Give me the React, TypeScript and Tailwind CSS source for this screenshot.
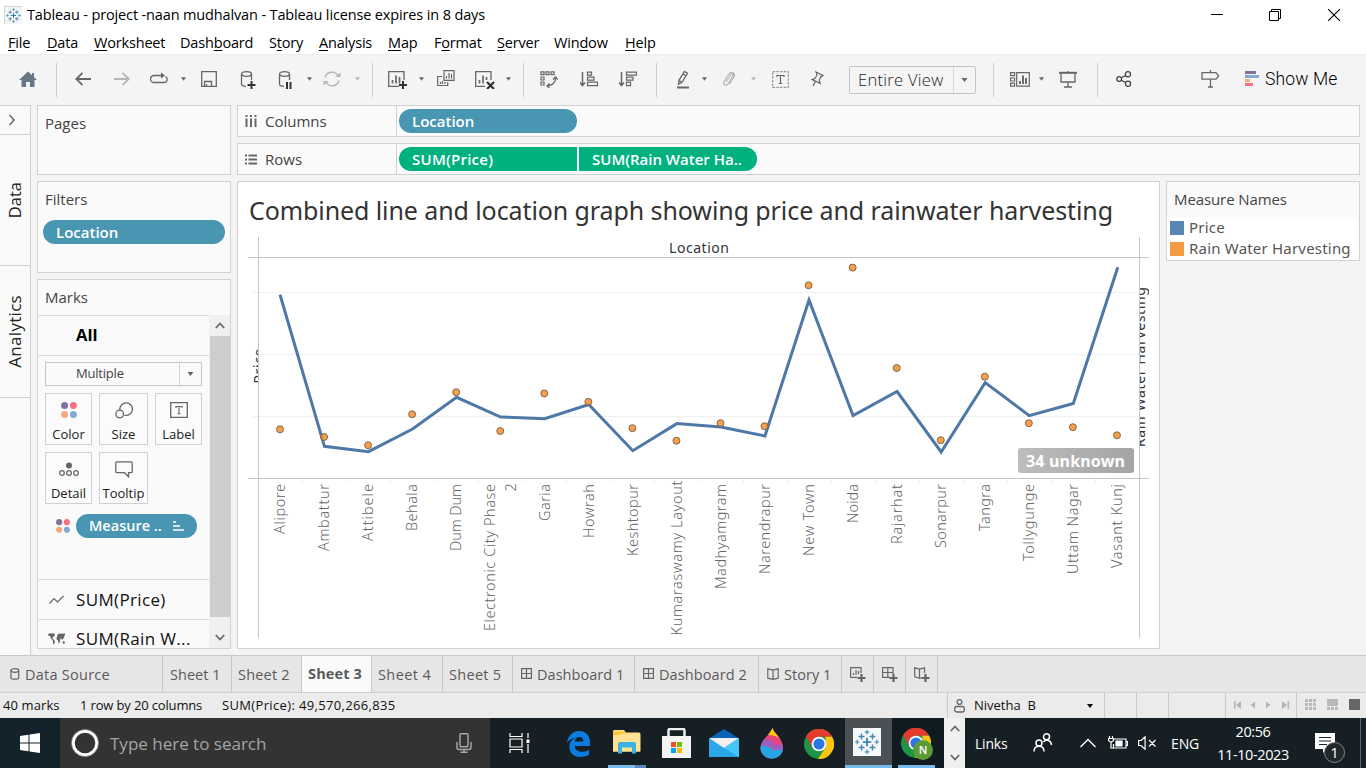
import React from "react";

const UI = "font-['Open_Sans','Noto_Sans',sans-serif]";
const SEG = "font-['Open_Sans','Noto_Sans',sans-serif]";

/* ---------- small shared pieces ---------- */

function Ico({ w = 20, h = 20, children, className = "" }: { w?: number; h?: number; children: React.ReactNode; className?: string }) {
  return (
    <svg width={w} height={h} viewBox={`0 0 ${w} ${h}`} fill="none" stroke="#666" strokeWidth="1.3" className={`shrink-0 ${className}`}>
      {children}
    </svg>
  );
}

function Slot({ className, children }: { className: string; children: React.ReactNode }) {
  return <div className={`flex h-full shrink-0 items-center justify-center ${className}`}>{children}</div>;
}

function Tool({ className, children }: { className: string; children: React.ReactNode }) {
  return <Slot className={`pb-[2px] ${className}`}>{children}</Slot>;
}

function Sep({ className = "" }: { className?: string }) {
  return <div className={`h-[34px] w-px shrink-0 bg-[#cfcfcf] ${className}`} />;
}

function Caret({ color = "#666", w = 5 }: { color?: string; w?: number }) {
  return (
    <svg width={w} height="4" viewBox="0 0 6 4" className="shrink-0">
      <path d="M0 0h6L3 4z" fill={color} />
    </svg>
  );
}

function TableauMark({ size, bg }: { size: number; bg: string }) {
  const plus = (x: number, y: number, r: number, c: string, sw: number) => (
    <path key={`${x}-${y}`} d={`M${x - r} ${y}H${x + r}M${x} ${y - r}V${y + r}`} stroke={c} strokeWidth={sw} />
  );
  return (
    <svg width={size} height={size} viewBox="0 0 28 28" className="shrink-0">
      <rect width="28" height="28" fill={bg} />
      {plus(14, 14, 4.3, "#2f7dab", 1.7)}
      {plus(8.5, 8.5, 3, "#4687ad", 1.4)}
      {plus(19.5, 8.5, 3, "#4687ad", 1.4)}
      {plus(8.5, 19.5, 3, "#4687ad", 1.4)}
      {plus(19.5, 19.5, 3, "#4687ad", 1.4)}
      {plus(14, 4.2, 2.3, "#4b8eb5", 1.2)}
      {plus(14, 23.8, 2.3, "#4b8eb5", 1.2)}
      {plus(4.2, 14, 2.3, "#4b8eb5", 1.2)}
      {plus(23.8, 14, 2.3, "#4b8eb5", 1.2)}
    </svg>
  );
}

/* ---------- title and menu ---------- */

function TitleBar() {
  return (
    <div className={`flex h-[30px] shrink-0 items-center bg-white ${SEG}`}>
      <div className="ml-1 flex size-[18px] items-center justify-center border border-[#d5d5d5] bg-[#f4f4f4]">
        <TableauMark size={17} bg="#f4f4f4" />
      </div>
      <span className="ml-[5px] whitespace-pre text-[14.5px] tracking-[-0.14px] text-black">Tableau - project -naan mudhalvan - Tableau license expires in 8 days</span>
      <div className="ml-auto flex items-center">
        <svg width="12" height="12" className="mr-[46px]"><path d="M0 5.5H12" stroke="#000" /></svg>
        <svg width="12" height="12" className="mr-[47px]" fill="none" stroke="#000">
          <path d="M.5 2.5h9v9h-9zM2.5 2.5v-2h9v9h-2" />
        </svg>
        <svg width="12" height="12" className="mr-[26px]"><path d="M0 0L12 12M12 0L0 12" stroke="#000" strokeWidth="1.1" /></svg>
      </div>
    </div>
  );
}

const MENUS: [string, string, string, string][] = [
  ["", "F", "ile", "w-[39px]"],
  ["", "D", "ata", "w-[47px]"],
  ["", "W", "orksheet", "w-[86px]"],
  ["Dash", "b", "oard", "w-[89px]"],
  ["S", "t", "ory", "w-[50px]"],
  ["", "A", "nalysis", "w-[69px]"],
  ["", "M", "ap", "w-[46px]"],
  ["F", "o", "rmat", "w-[63px]"],
  ["", "S", "erver", "w-[57px]"],
  ["Win", "d", "ow", "w-[71px]"],
  ["", "H", "elp", "w-[40px]"],
];

function MenuBar() {
  return (
    <div className={`flex h-6 shrink-0 items-center bg-white pl-2 pt-[2px] text-[14.5px] tracking-[-0.18px] text-black ${SEG}`}>
      {MENUS.map(([a, u, b, w]) => (
        <span key={a + u + b} className={`shrink-0 whitespace-nowrap ${w}`}>
          {a}
          <span className="underline decoration-1 underline-offset-2">{u}</span>
          {b}
        </span>
      ))}
    </div>
  );
}

/* ---------- toolbar ---------- */

function Toolbar() {
  return (
    <div className="flex h-[51px] shrink-0 items-center border-t border-[#ececec] bg-[#f4f4f4]">
      <Tool className="w-14">
        <Ico w={18} h={16}><path d="M9 .5L0 9h2.500v7H7v-5h4v5h4.500V9H18L15 6V2h-2v2.200z" fill="#697686" stroke="none" /></Ico>
      </Tool>
      <Sep />
      <Tool className="ml-3 w-7">
        <Ico w={16} h={14}><path d="M16 7H1.500M7.500 .8L1.300 7l6.200 6.200" strokeWidth="1.800" /></Ico>
      </Tool>
      <Tool className="w-[50px]">
        <Ico w={16} h={14}><path d="M0 7h14.500M8.500 .8L14.700 7l-6.200 6.200" stroke="#b4b4b4" strokeWidth="1.800" /></Ico>
      </Tool>
      <Tool className="w-6">
        <Ico w={18} h={14}>
          <path d="M13 3.500H4a3.200 3.200 0 0 0 0 7h10a3.200 3.200 0 0 0 1.500-6" />
          <path d="M11 .5l4 3-4 3z" fill="#666" stroke="none" />
        </Ico>
      </Tool>
      <Tool className="w-6"><Caret /></Tool>
      <Tool className="w-7">
        <Ico w={16} h={16}><path d="M.7.7h14.600v14.600H.7zM3.500 15v-4.500h7V15M5.500 15v-2" /></Ico>
      </Tool>
      <Tool className="w-[50px]">
        <Ico w={16} h={18} className="mb-[-1px]">
          <ellipse cx="6.500" cy="3" rx="5" ry="2.300" />
          <path d="M1.500 3v10c0 1.500 2 2.300 4.500 2.300M11.500 3v6" />
          <path d="M11.500 10v8M7.500 14h8" stroke="#333" strokeWidth="2" />
        </Ico>
      </Tool>
      <Tool className="w-6">
        <Ico w={14} h={18} className="mb-[-1px]">
          <ellipse cx="6.500" cy="3" rx="5" ry="2.300" />
          <path d="M1.500 3v10c0 1.500 2 2.300 4.500 2.300M11.500 3v6" />
          <path d="M9 11v7M12.500 11v7" stroke="#333" strokeWidth="2" />
        </Ico>
      </Tool>
      <Tool className="w-6"><Caret /></Tool>
      <Tool className="w-[22px]">
        <Ico w={18} h={16}>
          <path d="M2 6.500A7 7 0 0 1 15 5M16 9.500A7 7 0 0 1 3 11" stroke="#b4b4b4" />
          <path d="M17.500 1.500V6H12.500zM.5 14.500V10h5z" fill="#b4b4b4" stroke="none" />
        </Ico>
      </Tool>
      <Tool className="w-[29px]"><Caret color="#b8b8b8" /></Tool>
      <Sep />
      <Tool className="ml-[10px] w-7">
        <Ico w={20} h={18} className="mb-[-2px] ml-[2px]">
          <path d="M16 9V.7H.7v14.600H11" />
          <path d="M4.500 12.500V9M8 12.500V4.500M11.500 12.500V6" strokeWidth="1.700" />
          <path d="M15 10v8M11 14h8" stroke="#333" strokeWidth="2" />
        </Ico>
      </Tool>
      <Tool className="w-5"><Caret /></Tool>
      <Tool className="w-[30px]">
        <Ico w={18} h={17} className="mb-[2px]">
          <path d="M7 .7h10v9.600H7zM5 6.500H.7v9h10V12" strokeWidth="1.200" />
          <path d="M9.500 8.500V6M12 8.500V3M14.500 8.500V4M3.500 14v-2M5.500 14v-3M8 14v-2" strokeWidth="1.200" />
        </Ico>
      </Tool>
      <Tool className="ml-[10px] w-7">
        <Ico w={20} h={18} className="mb-[-2px]">
          <path d="M16 9V.7H.7v14.600H10" />
          <path d="M4.500 12.500V9M8 12.500V4.500M11.500 9V6" strokeWidth="1.700" />
          <path d="M12 11l7 7M19 11l-7 7" stroke="#333" strokeWidth="2.200" />
        </Ico>
      </Tool>
      <Tool className="w-[18px]"><Caret /></Tool>
      <Sep className="ml-[6px]" />
      <Tool className="ml-[11px] w-7">
        <Ico w={18} h={17}>
          <path d="M1 .9h3v2.800H1zM6 .9h3v2.800H6zM11 .9h3v2.800h-3zM1 6h3v3H1zM1 11h3v3H1z" strokeWidth="1.200" />
          <path d="M15.500 7c0 5-3.500 7.500-8.500 8M13 8.500l2.500-2.500 2.300 2.500M9.500 12.500L7 15l2.500 2" />
        </Ico>
      </Tool>
      <Tool className="w-[50px]">
        <Ico w={18} h={16} className="ml-[2px]">
          <path d="M2.500 1v13M0 11.500l2.500 3 2.500-3" strokeWidth="1.500" />
          <path d="M7.500 1.200h4v3h-4zM7.500 6.200h6.500v3H7.500zM7.500 11.200h10v3.500h-10z" strokeWidth="1.200" />
        </Ico>
      </Tool>
      <Tool className="w-[30px]">
        <Ico w={18} h={16}>
          <path d="M2.500 1v13M0 11.500l2.500 3 2.500-3" strokeWidth="1.500" />
          <path d="M7.500 1.200h10v3h-10zM7.500 6.200h6.500v3H7.500zM7.500 11.200h4v3.500h-4z" strokeWidth="1.200" />
        </Ico>
      </Tool>
      <Sep className="ml-[13px]" />
      <Tool className="ml-3 w-7">
        <Ico w={14} h={19}>
          <path d="M8.500 1.500l3 1.800-5.500 9-3.500 2 .5-4z M7 4l3 1.800M3 10.500l3 1.800" strokeWidth="1.300" />
          <path d="M1 17.500h12" strokeWidth="2" />
        </Ico>
      </Tool>
      <Tool className="w-[14px]"><Caret /></Tool>
      <Tool className="w-9">
        <Ico w={14} h={16}>
          <path d="M4 11l5-7.500c1-1.500 3-.3 2 1.300L6 13c-1.500 2.500-5.500.5-4-2.200L7 3c2-3 7-1 5 2.700L7.500 13" stroke="#b4b4b4" strokeWidth="1.200" />
        </Ico>
      </Tool>
      <Tool className="w-3"><Caret color="#b8b8b8" /></Tool>
      <Tool className="w-[42px]">
        <Ico w={17} h={17}>
          <path d="M.7.7h15.600v15.600H.7z" strokeDasharray="2.500 1.200" stroke="#999" />
          <path d="M5 6V4.500h7V6M8.500 4.500v8M6.800 12.500h3.400" strokeWidth="1.200" />
        </Ico>
      </Tool>
      <Tool className="w-8">
        <Ico w={13} h={16}><path d="M5 1l7 3.500-1.200 1.200-.9-.2-1.700 3.800 1 3L1 8.500l2.700-.8L6 4 5.600 2.500zM4.500 10.300L2 15" strokeWidth="1.200" /></Ico>
      </Tool>
      <div className="ml-4 flex h-[28px] w-[127px] shrink-0 rounded-[2px] border border-[#c4c4c4] bg-[#f5f5f5]">
        <span className={`flex flex-1 items-center whitespace-nowrap pl-[8px] text-[16.500px] font-light tracking-[0.3px] text-[#222] ${UI}`}>Entire View</span>
        <span className="flex w-[22px] items-center justify-center border-l border-[#d8d8d8]"><Caret w={7} /></span>
      </div>
      <Sep className="ml-[17px]" />
      <Tool className="ml-3 w-7">
        <Ico w={20} h={15}>
          <path d="M.6.7h4v3h-4zM.6 6h4v3h-4zM.6 11.200h4v3h-4zM6.700.7h12.600v13.500H6.700z" strokeWidth="1.200" />
          <path d="M10 12V9M13 12V3.500M16 12V6" strokeWidth="1.900" />
        </Ico>
      </Tool>
      <Tool className="w-[14px]"><Caret /></Tool>
      <Tool className="w-10">
        <Ico w={18} h={17}>
          <path d="M0 1.800h18" strokeWidth="2" />
          <path d="M2 2.500v8.500h14V2.500M9 0v2M9 11v5M5 16h8" />
        </Ico>
      </Tool>
      <Sep className="ml-[9px]" />
      <Tool className="w-[52px]">
        <Ico w={16} h={16}>
          <g stroke="#444"><circle cx="3.200" cy="8" r="2.400" /><circle cx="12" cy="3.200" r="2.600" /><circle cx="12" cy="12.800" r="2.600" /><path d="M5.300 6.800l4.300-2.300M5.300 9.200l4.300 2.300" /></g>
        </Ico>
      </Tool>
      <Tool className="ml-[46px] w-7">
        <Ico w={19} h={18}><path d="M1 2.700h14l2.700 3.300L15 9.200H1zM9.500 0v2.500M9.500 9.500V17M7 17h5" /></Ico>
      </Tool>
      <Tool className="ml-[21px] w-[14px]">
        <svg width="14" height="16" className="shrink-0">
          <path d="M0 1.500h11" stroke="#84709c" strokeWidth="3" />
          <path d="M0 5.500h14" stroke="#85a8d0" strokeWidth="3" />
          <path d="M0 9.500h5" stroke="#f5a97f" strokeWidth="3" />
          <path d="M0 13.500h8" stroke="#fa7080" strokeWidth="3" />
        </svg>
      </Tool>
      <span className="ml-[6px] whitespace-nowrap pb-[2px] font-['Roboto',sans-serif] text-[17.5px] font-light tracking-[0.15px] text-black">Show Me</span>
    </div>
  );
}

/* ---------- left side ---------- */

function Rail() {
  const tab = "flex shrink-0 items-center justify-center border-b border-[#d0d0d0]";
  const txt = `rotate-180 whitespace-nowrap text-[#222] [writing-mode:vertical-rl] ${UI}`;
  return (
    <div className="flex w-[31px] shrink-0 flex-col border-r border-t border-[#d0d0d0] bg-[#fafafa]">
      <div className={`${tab} h-[29px] pr-[6px]`}>
        <Ico w={8} h={12}><path d="M1.500 1l4.500 5-4.500 5" strokeWidth="1.500" /></Ico>
      </div>
      <div className={`${tab} h-[131px]`}><span className={`${txt} text-[16.500px]`}>Data</span></div>
      <div className={`${tab} h-[132px]`}><span className={`${txt} text-[17px] tracking-[0.3px]`}>Analytics</span></div>
    </div>
  );
}

function Card({ title, className, children }: { title: string; className: string; children?: React.ReactNode }) {
  return (
    <div className={`flex shrink-0 flex-col overflow-hidden border border-[#d2d2d2] bg-[#fafafa] ${className}`}>
      <div className={`flex h-[35px] shrink-0 items-center pl-[7px] text-[15px] text-[#444] ${UI}`}>{title}</div>
      {children}
    </div>
  );
}

function FourDots({ size, className = "" }: { size: number; className?: string }) {
  return (
    <svg width={size} height={size} viewBox="0 0 16 16" className={`shrink-0 ${className}`}>
      <circle cx="3.600" cy="3.600" r="3.500" fill="#84709c" />
      <circle cx="12.400" cy="3.600" r="3.500" fill="#fa7080" />
      <circle cx="3.600" cy="12.400" r="3.500" fill="#f5a97f" />
      <circle cx="12.400" cy="12.400" r="3.500" fill="#85a8d0" />
    </svg>
  );
}

function MarkButton({ label, className, children }: { label: string; className: string; children: React.ReactNode }) {
  return (
    <div className={`flex h-[52px] shrink-0 flex-col items-center border border-[#d0d0d0] bg-[#fbfbfb] ${className}`}>
      <div className="flex h-[32px] items-center justify-center">{children}</div>
      <span className={`whitespace-nowrap text-[13px] leading-[17px] text-[#222] ${UI}`}>{label}</span>
    </div>
  );
}

function MarksCard() {
  return (
    <Card title="Marks" className="mt-[6px] h-[370px]">
      <div className="flex min-h-0 flex-1">
        <div className="flex w-[171px] shrink-0 flex-col overflow-hidden border-t border-[#dcdcdc]">
          <div className={`flex h-[39px] shrink-0 items-center pl-[38px] text-[16.500px] font-bold text-black ${UI}`}>All</div>
          <div className="flex shrink-0 flex-col border-t border-[#dcdcdc] pl-[7px] pt-[6px]">
            <div className="flex h-6 w-[157px] border border-[#c6c6c6]">
              <span className={`flex flex-1 items-center pl-[30px] text-[13px] tracking-[-0.2px] text-[#444] ${UI}`}>Multiple</span>
              <span className="flex w-[22px] items-center justify-center border-l border-[#d6d6d6]"><Caret w={7} /></span>
            </div>
            <div className="mt-[7px] flex">
              <MarkButton label="Color" className="w-[47px]"><FourDots size={16} /></MarkButton>
              <MarkButton label="Size" className="ml-[7px] w-[49px]">
                <Ico w={18} h={18}><path d="M5 9.500a6.300 6.300 0 1 1 4.500 4.700" /><circle cx="4.700" cy="13" r="3.800" /></Ico>
              </MarkButton>
              <MarkButton label="Label" className="ml-[7px] w-[47px]">
                <Ico w={18} h={16}><path d="M.7.7h16.600v14.600H.7z" /><path d="M6 6V4.500h6V6M9 4.500v7M7.500 11.700h3" strokeWidth="1.100" /></Ico>
              </MarkButton>
            </div>
            <div className="mt-[7px] flex">
              <MarkButton label="Detail" className="w-[47px]">
                <Ico w={20} h={15}><circle cx="10" cy="3.500" r="3" fill="#666" stroke="none" /><circle cx="3" cy="11" r="2.300" /><circle cx="10" cy="11" r="2.300" /><circle cx="17" cy="11" r="2.300" /></Ico>
              </MarkButton>
              <MarkButton label="Tooltip" className="ml-[7px] w-[49px]">
                <Ico w={18} h={17}><path d="M2 .8h14q1.200 0 1.200 1.200v8.500q0 1.200-1.200 1.200h-2.500v4l-4-4H2Q.8 11.700.8 10.500V2Q.8.8 2 .8z" /></Ico>
              </MarkButton>
            </div>
            <div className="mt-[10px] flex h-6 items-center pl-[11px]">
              <FourDots size={14} />
              <div className={`ml-[6px] flex h-6 w-[121px] items-center rounded-full bg-[#4996b2] pl-[13px] text-[14.500px] font-semibold text-white ${UI}`}>
                Measure ..
                <svg width="12" height="10" className="ml-[11px]"><path d="M0 1h3M0 5h7M0 9h11" stroke="#fff" strokeWidth="1.700" /></svg>
              </div>
            </div>
          </div>
          <div className={`mt-[41px] flex h-[40px] shrink-0 items-center border-t border-[#dcdcdc] pl-[11px] text-[17px] tracking-[0.35px] text-[#111] ${UI}`}>
            <Ico w={15} h={10} className="mr-3"><path d="M.5 8.500l4.500-5 3.500 3.500L14.500 1" strokeWidth="1.200" /></Ico>
            SUM(Price)
          </div>
          <div className={`flex h-[29px] shrink-0 items-center whitespace-nowrap border-t border-[#dcdcdc] pl-[10px] pt-[9px] text-[17px] leading-[18px] tracking-[0.35px] text-[#111] ${UI}`}>
            <svg width="17" height="12" className="mr-[11px] shrink-0" fill="#666">
              <path d="M0 1l3-.7 4 .5-.5 2.200L5 4l-.5 1.500L6 7l1 1.200-1 3.300-1-.8V8L3 5.500 2 3 .5 2.800zM9.500 1.500l2-1 2 .3L17 .6v2l-1 .6.3 1.800-1.300.5-.8 2-1-2-1 .2-.2 2.800L10.800 11 10 7.500 8.300 6 9 3.800zM14.500 8.500l2-.3.500 2.300-2 .3z" />
            </svg>
            SUM(Rain W...
          </div>
        </div>
        <div className="flex flex-1 flex-col bg-[#f0f0f0] pl-px">
          <div className="flex h-[21px] shrink-0 items-center justify-center"><Ico w={10} h={7}><path d="M.8 6L5 1.500 9.200 6" strokeWidth="1.800" /></Ico></div>
          <div className="flex-1 bg-[#cdcdcd]" />
          <div className="flex h-[31px] shrink-0 items-center justify-center pt-[10px]"><Ico w={10} h={7}><path d="M.8 1L5 5.500 9.200 1" strokeWidth="1.800" /></Ico></div>
        </div>
      </div>
    </Card>
  );
}

/* ---------- shelves ---------- */

function Shelf({ label, icon, children, className = "" }: { label: string; icon: React.ReactNode; children: React.ReactNode; className?: string }) {
  return (
    <div className={`flex h-8 shrink-0 border border-[#d2d2d2] bg-[#fafafa] ${className}`}>
      <div className={`flex w-[159px] shrink-0 items-center border-r border-[#d2d2d2] pl-[7px] text-[15px] text-[#444] ${UI}`}>
        <span className="mr-2 flex w-3 justify-center">{icon}</span>
        {label}
      </div>
      <div className="flex items-center pl-[2px]">{children}</div>
    </div>
  );
}

const PILL = "flex h-6 shrink-0 items-center whitespace-nowrap pl-[13px] text-[15px] font-semibold text-white";

/* ---------- chart ---------- */

const PLACES: [string, number, number, number][] = [
  ["Alipore", 296, 429.3, 50],
  ["Ambattur", 446.3, 437, 67],
  ["Attibele", 451.7, 445.3, 57],
  ["Behala", 429, 414.3, 47],
  ["Dum Dum", 397.3, 392.2, 67],
  ["Electronic City Phase", 417, 431, 147],
  ["Garia", 418.7, 393.4, 37],
  ["Howrah", 404.5, 401.8, 54],
  ["Keshtopur", 450.7, 428.2, 72],
  ["Kumaraswamy Layout", 423.6, 440.7, 155],
  ["Madhyamgram", 427, 423.2, 105],
  ["Narendrapur", 436, 426.3, 90],
  ["New Town", 300, 285.3, 72],
  ["Noida", 415.5, 267.6, 39],
  ["Rajarhat", 391.5, 368, 60],
  ["Sonarpur", 452, 440.2, 64],
  ["Tangra", 382.6, 376.7, 47],
  ["Tollygunge", 415.7, 423.2, 77],
  ["Uttam Nagar", 403.5, 427.2, 90],
  ["Vasant Kunj", 268.7, 435.3, 84],
];

const px = (i: number) => 280.4 + i * 44.05;

function Chart() {
  return (
    <svg width="921" height="410" viewBox="238 237 921 410" className="block shrink-0" fontFamily="'Noto Sans', sans-serif">
      <defs>
        <clipPath id="axisLeft"><rect x="248" y="258" width="10" height="220" /></clipPath>
        <clipPath id="axisRight"><rect x="1140" y="258" width="9" height="220" /></clipPath>
        <linearGradient id="badge" x1="0" x2="1"><stop offset="0" stopColor="#bdbdbd" /><stop offset="1" stopColor="#a4a4a4" /></linearGradient>
      </defs>
      <path d="M253 292.500H1144M253 354.500H1144M253 416.500H1144" stroke="#f0f0f0" />
      {PLACES.slice(1).map((p, i) => (
        <path key={p[0]} d={`M${Math.round(302 + i * 44.05) + 0.5} 479v3`} stroke="#ececec" />
      ))}
      <path d="M248 257.500H1149M248 478.500H1149M258.500 237V638M1139.500 237V638" stroke="#c6c6c6" />
      <text x="669" y="252.500" fontSize="14" fill="#333" textLength="60">Location</text>
      <g clipPath="url(#axisLeft)">
        <text transform="translate(264 383.500) rotate(-90)" fontSize="14" fill="#333" textLength="35">Price</text>
      </g>
      <g clipPath="url(#axisRight)">
        <text transform="translate(1144.600 447) rotate(-90)" fontSize="14" fill="#333" textLength="160">Rain Water Harvesting</text>
      </g>
      <polyline points={PLACES.map((p, i) => `${px(i)},${p[1]}`).join(" ")} fill="none" stroke="#4e79a7" strokeWidth="3" strokeLinecap="square" />
      {PLACES.map((p, i) => (
        <circle key={p[0]} cx={px(i) - 0.4} cy={p[2]} r="3.500" fill="#f28e2b" fillOpacity="0.850" stroke="#75604c" strokeWidth="0.900" />
      ))}
      {PLACES.map((p, i) => {
        const top = i === 9 ? 480.5 : 484;
        const x = i === 5 ? 495 : px(i) + 4.8;
        return (
          <text key={p[0]} transform={`translate(${x} ${top + p[3]}) rotate(-90)`} fontSize="14.500" fontWeight="300" fill="#666" textLength={p[3]}>
            {p[0]}
          </text>
        );
      })}
      <text transform="translate(515.500 491.500) rotate(-90)" fontSize="14.500" fontWeight="300" fill="#666">2</text>
      <rect x="1018" y="448" width="116" height="25" rx="3" fill="url(#badge)" />
      <text x="1026" y="467" fontSize="16" fontWeight="700" fill="#fff" textLength="99">34 unknown</text>
    </svg>
  );
}

function Legend() {
  const row = "flex h-[21px] items-center whitespace-nowrap pl-[3px] font-['Noto_Sans',sans-serif] text-[15px] tracking-[0.2px] text-[#555]";
  return (
    <div className="ml-[6px] h-[80px] w-[194px] shrink-0 border border-[#d2d2d2] bg-white">
      <div className={`flex h-[35px] items-center bg-[#fafafa] pl-[7px] text-[15px] tracking-[-0.1px] text-[#444] ${UI}`}>Measure Names</div>
      <div className={row}><span className="mr-[5px] size-[14px] bg-[#5a86b4]" />Price</div>
      <div className={row}><span className="mr-[5px] size-[14px] bg-[#f39c43]" />Rain Water Harvesting</div>
    </div>
  );
}

/* ---------- bottom bars ---------- */

const TAB = "flex h-full shrink-0 items-center whitespace-nowrap border-r border-[#c9c9c9]";

function GridIcon({ plus = false }: { plus?: boolean }) {
  return (
    <Ico w={plus ? 16 : 11} h={plus ? 15 : 11} className={plus ? "" : "mb-[2px]"}>
      <path d={plus ? "M11 7V.6H.6v9.800H8M5.800.6v9.800M.6 5.500H11" : "M.6.6h9.800v9.800H.6zM5.500.6v9.800M.6 5.500h9.800"} strokeWidth="1.200" />
      {plus && <path d="M11.500 7v8M7.500 11h8" strokeWidth="2.200" />}
    </Ico>
  );
}

function BookIcon({ plus = false }: { plus?: boolean }) {
  return (
    <Ico w={plus ? 16 : 12} h={plus ? 15 : 12} className={plus ? "" : "mb-[1px]"}>
      <path d={plus ? "M5.500 2.200L.7.8v9l4.800 1.500zM5.500 2.200L10.500.8V6M5.500 11.300l2-.6" : "M6 2.200L.8.8v9.400L6 11.400l5.200-1.200V.8zM6 2.200v9"} strokeWidth="1.200" />
      {plus && <path d="M11.500 7v8M7.500 11h8" strokeWidth="2.200" />}
    </Ico>
  );
}

function TabBar() {
  return (
    <div className={`flex h-[37px] shrink-0 border-t border-[#c9c9c9] bg-[#e6e6e6] text-[14.500px] tracking-[0.03px] text-[#5a5a5a] ${UI}`}>
      <div className={`${TAB} w-[163px] pl-[10px] pt-px tracking-[0.25px]`}>
        <Ico w={10} h={12} className="mb-[2px] mr-[5px]"><ellipse cx="4.800" cy="2.500" rx="3.900" ry="1.800" /><path d="M.9 2.500v7.200c0 2 7.800 2 7.800 0V2.500" strokeWidth="1.200" /></Ico>
        Data Source
      </div>
      <div className={`${TAB} w-[69px] pl-[7px] pt-px`}>Sheet 1</div>
      <div className={`${TAB} w-[70px] pl-[6px] pt-px tracking-[0.2px]`}>Sheet 2</div>
      <div className={`${TAB} w-[70px] bg-[#fafafa] pl-[6px] font-bold tracking-[0.15px]`}>Sheet 3</div>
      <div className={`${TAB} w-[71px] pl-[6px] pt-px tracking-[0.4px]`}>Sheet 4</div>
      <div className={`${TAB} w-[70px] pl-[6px] pt-px tracking-[0.3px]`}>Sheet 5</div>
      <div className={`${TAB} w-[122px] gap-[5px] pl-2 pt-px`}><GridIcon />Dashboard 1</div>
      <div className={`${TAB} w-[124px] gap-[5px] pl-2 pt-px tracking-[0.1px]`}><GridIcon />Dashboard 2</div>
      <div className={`${TAB} w-[83px] gap-[5px] pl-2 pt-px`}><BookIcon />Story 1</div>
      <div className={`${TAB} w-8 justify-center pl-px`}>
        <Ico w={16} h={15}><path d="M11 6V.6H.6v9.800H7M3.500 8V6M6 8V3M8.500 7V4" strokeWidth="1.200" /><path d="M11.500 7v8M7.500 11h8" strokeWidth="2.200" /></Ico>
      </div>
      <div className={`${TAB} w-8 justify-center pl-px`}><GridIcon plus /></div>
      <div className={`${TAB} w-8 justify-center pl-px`}><BookIcon plus /></div>
    </div>
  );
}

function StatusBar() {
  const cell = "h-full shrink-0 border-l border-[#cacaca]";
  return (
    <div className={`flex h-[26px] shrink-0 items-center border-t border-[#cfcfcf] bg-[#ebebeb] text-[13px] text-[#111] ${UI}`}>
      <span className="w-[77px] shrink-0 whitespace-nowrap pl-[3px] tracking-[0.1px]">40 marks</span>
      <span className="w-[142px] shrink-0 whitespace-nowrap pl-[3px] tracking-[-0.15px]">1 row by 20 columns</span>
      <span className="flex-1 whitespace-nowrap pl-[3px] tracking-[0.35px]">SUM(Price): 49,570,266,835</span>
      <div className={`${cell} flex w-[157px] items-center pl-[6px]`}>
        <Ico w={11} h={14}><circle cx="5.500" cy="3" r="2.400" /><rect x=".7" y="7.500" width="9.600" height="5.500" rx="2" /></Ico>
        <span className={`ml-[9px] whitespace-pre text-[13px] ${SEG}`}>Nivetha  B</span>
        <span className="ml-auto mr-[10px]"><Caret color="#000" w={8} /></span>
      </div>
      <div className={`${cell} w-8`} />
      <div className={`${cell} w-8`} />
      <div className={`${cell} w-[57px]`} />
      <div className={`${cell} flex w-[71px] items-center justify-center pb-[2px]`}>
        <svg width="55" height="8" fill="#b5b5b5">
          <path d="M0 0h1.500v8H0zM7 0v8L2 4zM21 0.500v7L16.500 4zM32 .5v7L36.500 4zM48 0v8l5-4zM53.500 0H55v8h-1.500z" />
        </svg>
      </div>
      <div className={`${cell} flex w-[70px] items-center pb-px pl-[8px]`}>
        <svg width="56" height="12" fill="#b8b8b8">
          <path d="M0 0h3v3H0zM4 0h3v3H4zM8 0h3v3H8zM0 4h3v3H0zM4 4h3v3H4zM8 4h3v3H8zM0 8h3v3H0zM4 8h3v3H4zM8 8h3v3H8zM22 0h11v7H22zM22 8h3v3h-3zM26 8h3v3h-3zM30 8h3v3h-3z" />
          <path d="M44 0h11v11H44z" fill="#666" />
        </svg>
      </div>
    </div>
  );
}

function Chrome() {
  return (
    <svg width="30" height="30" viewBox="0 0 30 30" className="shrink-0">
      <circle cx="15" cy="15" r="15" fill="#1e9447" />
      <path d="M2 7.500A15 15 0 0 1 28 7.500H15L8.500 18.800z" fill="#e33b2e" />
      <path d="M28 7.500A15 15 0 0 1 14 30L21.500 18.700V7.500z" fill="#fdc512" />
      <path d="M2 7.500A15 15 0 0 1 28 7.500H15z" fill="#e33b2e" />
      <circle cx="15" cy="15" r="7.300" fill="#fff" />
      <circle cx="15" cy="15" r="5.600" fill="#2a76e8" />
    </svg>
  );
}

function TaskBar() {
  return (
    <div className={`flex h-[50px] shrink-0 items-center bg-[#151f24] ${SEG}`}>
      <div className="flex h-full w-[60px] shrink-0 items-center justify-center bg-[#14232b]">
        <svg width="20" height="20" fill="#fff"><path d="M0 3l8.500-1.200v7.700H0zM9.500 1.600L20 0v9.500H9.500zM0 10.500h8.500v7.700L0 17zM9.500 10.500H20V20L9.500 18.400z" /></svg>
      </div>
      <div className="flex h-full w-[430px] shrink-0 items-center bg-[#333] pl-[11px]">
        <svg width="28" height="28" className="shrink-0"><circle cx="14" cy="14" r="11.800" fill="none" stroke="#fff" strokeWidth="3" /><circle cx="14" cy="14" r="13.500" fill="none" stroke="#999" strokeWidth=".8" /></svg>
        <span className="ml-[11px] whitespace-nowrap pt-px text-[17px] text-[#a5a5a5]">Type here to search</span>
        <svg width="16" height="20" className="ml-auto mr-[18px]" fill="none" stroke="#aaa" strokeWidth="1.400"><rect x="4" y=".8" width="8" height="13" rx="1" /><path d="M1 9v5.500q0 2 2 2h10q2 0 2-2V9M8 16.500v2.700M4.500 19.200h7" /></svg>
      </div>
      <Slot className="w-[59px]">
        <svg width="21" height="20" fill="none" stroke="#fff" strokeWidth="1.200"><path d="M1 0v3.500h12V0M1 20v-3.500h12V20M1 6h12v8H1zM19 0v5M19 11v9" /><path d="M17.500 6.500h3v3.500h-3z" fill="#fff" stroke="none" /></svg>
      </Slot>
      <Slot className="ml-[2px] w-[54px] pt-px">
        <svg width="25" height="26" viewBox="0 0 26 27" fill="#0a7ce0">
          <path d="M1 12.500C2 5 7 0 13.500 0 21 0 25 5.500 25 11.500V15.500H9c.3 4 3.800 6 8 6 2.700 0 5-.7 7-2v5.300C21.500 26.300 18.500 27 15.500 27 8 27 3.500 22.500 3.500 16.500 3.500 12 6 9 9.500 7.300 6 7.500 3 9.200 1 12.500zM9.200 11h8.900c0-3-1.600-4.800-4.300-4.800S9.500 8.200 9.200 11z" />
        </svg>
      </Slot>
      <div className="flex h-full w-[44px] shrink-0 flex-col items-center">
        <div className="flex flex-1 items-center pt-[1px]">
          <svg width="28" height="25"><path d="M0 1.500Q0 0 1.500 0H11l2 2.500h13q1.500 0 1.500 1.500v17.500H0z" fill="#ffe08a" /><path d="M0 6Q0 2 2 2h9l2 1" fill="#f9c536" stroke="#f9c536" /><path d="M0 5h27v16.500H0z" fill="#ffe392" /><path d="M5 23.500V14q0-2 2-2h14q2 0 2 2v9.500h-4v-6h-10v6z" fill="#3bb1e5" /></svg>
        </div>
        <div className="flex h-[3px] w-[38px] bg-[#5a89b4]"><div className="w-[27px] bg-[#76b9ed]" /></div>
      </div>
      <Slot className="w-[54px]">
        <svg width="29" height="30"><path d="M6.500 9V2.500Q6.500 1 8 1h13q1.500 0 1.500 1.500V9" fill="none" stroke="#eee" strokeWidth="2.500" /><path d="M0 8h29v22H0z" fill="#f4f4f4" /><path d="M9 14h5v5H9z" fill="#f25022" /><path d="M15 14h5v5h-5z" fill="#7fba00" /><path d="M9 20h5v5H9z" fill="#00a4ef" /><path d="M15 20h5v5h-5z" fill="#ffb900" /></svg>
      </Slot>
      <Slot className="w-[41px]">
        <svg width="30" height="28"><path d="M0 9.500L15 0l15 9.500z" fill="#0a63b8" /><path d="M1 9h28v10L15 24 1 19z" fill="#f1f1f1" /><path d="M0 9v19h30V9L15 19z" fill="#2ba6e8" /><path d="M30 9v19L15 19z" fill="#45c6f8" /></svg>
      </Slot>
      <Slot className="w-[55px]">
        <svg width="24" height="31" viewBox="0 0 24 31">
          <defs><clipPath id="drop"><path d="M12.500 0C14 6 23 10 23 20c0 6-5 10.500-11 10.500S.500 26 .500 20C.500 12 9 8 12.500 0z" /></clipPath></defs>
          <g clipPath="url(#drop)"><path d="M0 0h24v31H0z" fill="#e8467c" /><path d="M9 0h8l4 11q-6-4-13-4z" fill="#fcc60e" /><path d="M0 12q8-3 12 2t12 2v5q-6 4-11-1T0 20z" fill="#9a5fc0" /><path d="M0 19q7-3 11 1t13 1v10H0z" fill="#25a5e5" /></g>
        </svg>
      </Slot>
      <Slot className="w-[40px] pt-0.5"><Chrome /></Slot>
      <div className="ml-[6px] flex h-full w-[47px] shrink-0 flex-col items-center bg-[#4a5054]">
        <div className="mr-[3px] flex flex-1 items-center"><TableauMark size={28} bg="#f5f8fa" /></div>
        <div className="h-[3px] w-full bg-[#76b9ed]" />
      </div>
      <div className="flex h-full w-[52px] shrink-0 flex-col items-center bg-[#101b21] pr-[4px]">
        <div className="relative flex flex-1 items-center pt-0.5"><Chrome />
          <span className="absolute -right-[2px] bottom-[5px] flex size-[20px] items-center justify-center rounded-full bg-[#5d9b37] text-[11px] font-semibold text-white">N</span>
        </div>
        <div className="h-[3px] w-[37px] bg-[#76b9ed]" />
      </div>
      <div className="flex h-full w-[21px] shrink-0 flex-col items-center justify-between bg-[#f0f0f0] py-[7px]">
        <Ico w={10} h={7}><path d="M.8 6L5 1.500 9.200 6" strokeWidth="1.800" /></Ico>
        <Ico w={10} h={7}><path d="M.8 1L5 5.500 9.200 1" strokeWidth="1.800" /></Ico>
      </div>
      <span className="ml-[10px] w-[58px] shrink-0 text-[14px] tracking-[-0.2px] text-white">Links</span>
      <svg width="20" height="20" className="shrink-0" fill="none" stroke="#fff" strokeWidth="1.500"><circle cx="13.500" cy="3.800" r="3" /><circle cx="6" cy="10" r="3" /><path d="M1 18.500c0-3.500 2-5.300 5-5.300s5 1.800 5 5.300M10.300 9c3.700-3.500 8-1 8.200 3" /></svg>
      <svg width="16" height="10" className="ml-[27px] shrink-0" fill="none" stroke="#fff" strokeWidth="1.300"><path d="M.5 9L8 1.500 15.500 9" /></svg>
      <svg width="20" height="14" className="ml-[12px] shrink-0" fill="none" stroke="#fff" strokeWidth="1.200"><path d="M6 3h12v9H5.500V8M18.500 5.500H19.500v4h-1" /><path d="M8 5h6v5H8z" fill="#fff" /><path d="M1.500 0v2.500M4.500 0v2.500M.5 2.500h5v2L3 6.500.5 4.500zM3 6v6h2.500" /></svg>
      <svg width="19" height="14" className="ml-[10px] shrink-0" fill="none" stroke="#fff" strokeWidth="1.200"><path d="M.6 4.500h2.500l4-3.700v12.400l-4-3.700H.6zM11 4l6.500 6.500M17.500 4L11 10.500" /></svg>
      <span className="ml-[14px] w-[36px] shrink-0 text-[14px] tracking-[-0.1px] text-white">ENG</span>
      <div className="ml-[4px] flex w-[84px] shrink-0 flex-col items-center whitespace-nowrap text-[14.500px] leading-[23px] tracking-[-0.4px] text-white">
        <span>20:56</span>
        <span>11-10-2023</span>
      </div>
      <div className="relative ml-[20px] mt-[9px] h-[30px] w-[32px] shrink-0">
        <svg width="20" height="20"><path d="M0 0h20v16h-8l-4 4v-4H0z" fill="#fff" /><path d="M4 4.500h12M4 8h12M4 11.500h8" stroke="#1a2227" strokeWidth="1.200" /></svg>
        <span className="absolute left-[9px] top-[9px] flex size-[21px] items-center justify-center rounded-full border border-[#888] bg-[#20282c] text-[15px] text-white">1</span>
      </div>
      <div className="ml-auto mr-[5px] h-full w-px bg-[#59646a]" />
    </div>
  );
}

export default function App() {
  return (
    <div className="flex h-[768px] w-[1366px] flex-col overflow-hidden bg-[#f4f4f4]">
      <TitleBar />
      <MenuBar />
      <Toolbar />
      <div className="flex min-h-0 flex-1">
        <Rail />
        <div className="ml-[6px] flex w-[194px] shrink-0 flex-col">
          <Card title="Pages" className="h-[70px]" />
          <Card title="Filters" className="mt-[6px] h-[92px]">
            <div className={`ml-[5px] mt-[3px] w-[182px] rounded-full bg-[#4996b2] ${PILL} ${UI}`}>Location</div>
          </Card>
          <MarksCard />
        </div>
        <div className="ml-[6px] flex min-w-0 flex-1 flex-col">
          <div className="mr-[6px] flex flex-col">
            <Shelf
              label="Columns"
              icon={<Ico w={12} h={13}><path d="M1.500 0v2M6 0v2M10.500 0v2M1.500 3.500V12M6 3.500V12M10.500 3.500V12" strokeWidth="2" /></Ico>}
            >
              <div className={`w-[178px] rounded-full bg-[#4996b2] ${PILL} ${UI}`}>Location</div>
            </Shelf>
            <Shelf
              label="Rows"
              className="mt-[6px]"
              icon={<Ico w={12} h={11}><path d="M0 1.500h2M0 5.500h2M0 9.500h2M3.500 1.500H12M3.500 5.500H12M3.500 9.500H12" strokeWidth="1.800" /></Ico>}
            >
              <div className={`w-[178px] rounded-l-full bg-[#00b180] tracking-[0.25px] ${PILL} ${UI}`}>SUM(Price)</div>
              <div className={`ml-[2px] w-[178px] rounded-r-full bg-[#00b180] ${PILL} ${UI}`}>SUM(Rain Water Ha..</div>
            </Shelf>
          </div>
          <div className="mt-[6px] flex items-start">
            <div className="flex h-[468px] w-[923px] shrink-0 flex-col overflow-hidden border border-[#d2d2d2] bg-white">
              <h1 className="h-[55px] shrink-0 whitespace-nowrap pl-[11px] pt-[10px] font-['Noto_Sans',sans-serif] text-[25px] leading-[37px] tracking-[-0.09px] text-[#333]">
                Combined line and location graph showing price and rainwater harvesting
              </h1>
              <Chart />
            </div>
            <Legend />
          </div>
        </div>
      </div>
      <TabBar />
      <StatusBar />
      <TaskBar />
    </div>
  );
}
